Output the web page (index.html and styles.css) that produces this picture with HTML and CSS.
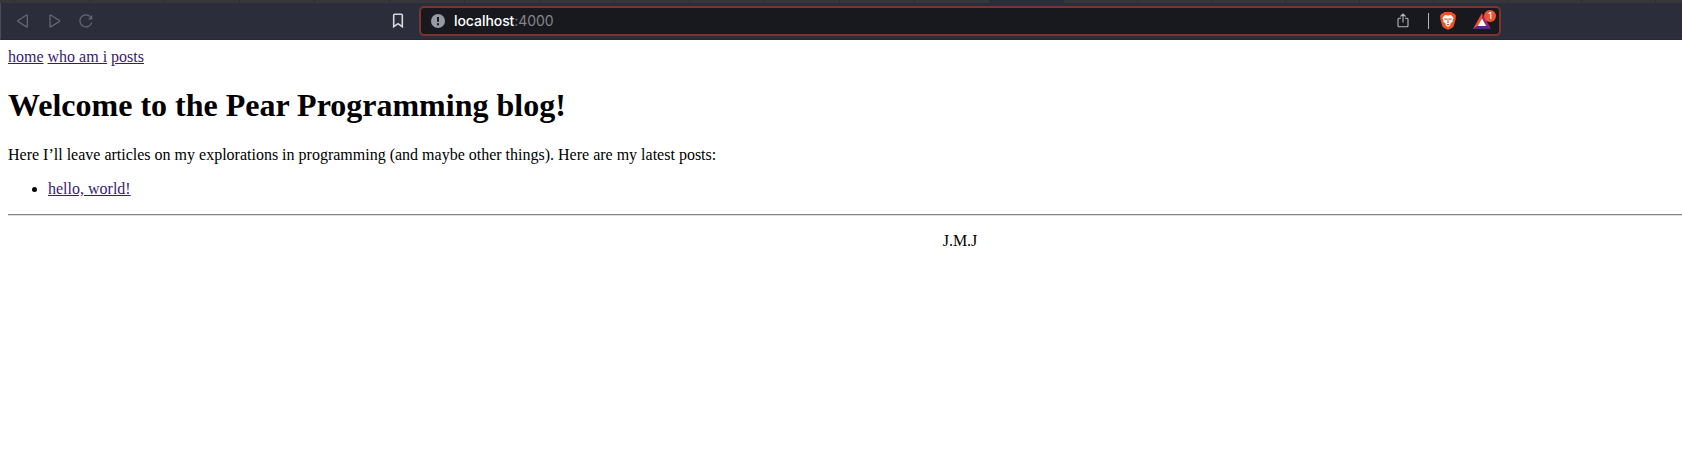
FILE: index.html
```html
<!DOCTYPE html>
<html lang="en">
<head>
<meta charset="utf-8">
<title>Pear Programming</title>
<link rel="stylesheet" href="styles.css">
</head>
<body>
<div class="tabs"><div class="tab-list"></div><div class="tab-active"></div><div class="tab-rest"></div></div>
<header class="toolbar">
  <div class="nav-buttons">
    <svg width="12" height="14" viewBox="0 0 12 14"><path d="M9.600 1 1 6.500Q.4 7 1 7.500l8.600 5.400Q10.300 13.200 10.300 12.400V1.600Q10.300.7 9.600 1Z"/></svg>
    <svg width="12" height="14" viewBox="0 0 12 14"><path d="M1.700 1 10.300 6.500q.6.500 0 1L1.700 12.900Q1 13.200 1 12.400V1.600Q1 .7 1.700 1Z"/></svg>
    <svg class="reload" width="15" height="14" viewBox="0 0 15 14"><path d="M11.200 2.600A6 6 0 1 0 12.700 8.600"/><path class="arrow" d="M13.300.8v4.600H8.900Z"/></svg>
  </div>
  <svg class="bookmark" width="12" height="15" viewBox="0 0 12 15"><path d="M1.700 2.200q0-1 1-1h6.600q1 0 1 1v11.500L6 10.700 1.700 13.700Z"/></svg>
  <div class="address">
    <svg class="info" width="14" height="14" viewBox="0 0 14 14"><circle cx="7" cy="7" r="7"/><path d="M7 3v4.800M7 9.300v1.900"/></svg>
    <span class="url"><span class="host">localhost</span><span class="port">:4000</span></span>
    <svg class="share" width="12" height="15" viewBox="0 0 12 15"><path d="M4 5.200H2q-1 0-1 1v6.600q0 1 1 1h8q1 0 1-1V6.200q0-1-1-1H8M6 9.500V1.200M3.500 3.500 6 1l2.500 2.500"/></svg>
    <span class="divider"></span>
    <svg class="shield" width="16" height="18" viewBox="0 0 16 18"><path fill="#ed5326" d="M4.300 0h7.400l1.500 1.500h1.300L16 4l-.5 1.500.3 1-2 7.300q-.3 1-1.200 1.700L8 18l-4.600-2.500q-.9-.7-1.200-1.700l-2-7.300.3-1L0 4l1.500-2.500h1.300Z"/><path fill="#fff" d="m5 3 3 .5L11 3l2.600 3-1 2 .2 1.500-2.600 2.200.4 1.400L8 15l-2.600-1.900.4-1.400-2.600-2.200L3.400 8l-1-2Z"/><path fill="#ed5326" d="m4 6.300 3 .4-.3 1.500-1.900-.7ZM12 6.300l-3 .4.300 1.500 1.900-.7ZM7.500 6.300h1l-.1 3.100 1 .7L8 11l-1.400-.9 1-.7ZM6.400 12.500 8 11.800l1.600.7L8 13.500Z"/></svg>
    <div class="rewards">
      <svg width="18" height="16" viewBox="0 0 18 16"><path fill="#f0502a" d="M9 0 0 16l5.300-3.200L9 6Z"/><path fill="#a5206f" d="m9 0 9 16-5.300-3.200L9 6Z"/><path fill="#50298d" d="m0 16 5.300-3.200h7.400L18 16Z"/><path fill="#fff" d="m9 5.500 4.200 7.400H4.800Z"/></svg>
      <span class="badge">1</span>
    </div>
  </div>
</header>
<main class="page">
  <nav><a href="#home">home</a> <a href="#about">who am i</a> <a href="#posts">posts</a></nav>
  <h1>Welcome to the Pear Programming blog!</h1>
  <p>Here I’ll leave articles on my explorations in programming (and maybe other things). Here are my latest posts:</p>
  <ul><li><a href="#hello">hello, world!</a></li></ul>
  <hr>
  <footer>J.M.J</footer>
</main>
</body>
</html>
```
FILE: styles.css
```css
* { box-sizing: border-box; }
html { overflow: hidden; }
body {
  margin: 0;
  height: 469px;
  overflow: hidden;
  background: #fff;
  color: #000;
  font: 16px/18px "Liberation Serif", "Times New Roman", serif;
}
svg { display: block; flex: none; }
.tabs { display: flex; height: 3px; background: #2c2d3a; }
.tab-list {
  width: 989px;
  background: repeating-linear-gradient(90deg, transparent 0 14px, #2e2e32 14px 15px, transparent 15px 75px), #37363b;
}
.tab-active { width: 75px; }
.tab-rest {
  flex: 1;
  background: repeating-linear-gradient(90deg, transparent 0 73px, #2e2e32 73px 74px), #37363b;
}
.toolbar {
  display: flex;
  align-items: center;
  height: 37px;
  padding-bottom: 1px;
  background: #2c2d3a;
  border-left: 1px solid #4b4c57;
  border-bottom: 1px solid #292735;
}
.nav-buttons {
  display: flex;
  gap: 20px;
  width: 391px;
  padding-left: 16px;
  fill: none;
  stroke: #666772;
  stroke-width: 1.300;
}
.reload { margin-left: -2px; }
.arrow { fill: #666772; stroke: none; }
.bookmark { fill: none; stroke: #d8d9dc; stroke-width: 1.600; }
.address {
  display: flex;
  align-items: center;
  width: 1082px;
  height: 30px;
  margin-left: 15px;
  padding-left: 10px;
  border: 2px solid #7c352c;
  border-radius: 5px;
  background: #18191e;
}
.info { fill: #949ba2; }
.info path { stroke: #18191e; stroke-width: 2; }
.url {
  width: 943px;
  margin-left: 9px;
  font: 14px/18px Inter, sans-serif;
  letter-spacing: -0.060px;
}
.host { color: #fff; font-weight: 500; }
.port { color: #84868a; }
.share { fill: none; stroke: #b5b7ba; stroke-width: 1.100; }
.divider { width: 1px; height: 16px; margin: 0 11px 0 19px; background: #b5b7ba; }
.rewards { position: relative; margin-left: 17px; }
.badge {
  position: absolute;
  top: -3px;
  left: 11px;
  width: 12px;
  height: 12px;
  border-radius: 50%;
  background: #ed5430;
  color: #fff;
  font: 500 9px/12px Inter, sans-serif;
  text-align: center;
}
.page { padding: 8px 0 0 8px; }
a { color: #391b70; }
h1 { margin: 21px 0 22px; font-size: 32px; line-height: 37px; }
p { margin: 16px 0; }
ul { margin: 16px 0; padding-left: 40px; }
hr { margin: 8px 0; border: 0; border-top: 1px solid #858585; border-bottom: 1px solid #dedede; }
footer { margin-top: 16px; padding-left: 230px; text-align: center; }
```
